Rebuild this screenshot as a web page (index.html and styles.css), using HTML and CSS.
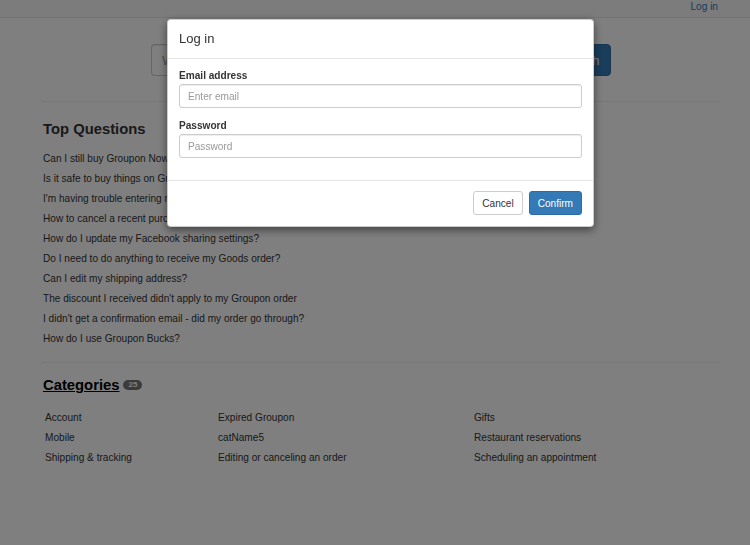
FILE: index.html
```html
<!DOCTYPE html>
<html lang="en">
<head>
<meta charset="utf-8">
<title>Help Center</title>
<link rel="stylesheet" href="styles.css">
</head>
<body>
<nav class="navbar">
  <a class="nav-link" href="#">Log in</a>
</nav>
<main class="container">
  <form class="search">
    <div class="input-group">
      <input class="search-input" type="text" placeholder="What can we help you with?">
      <button class="search-btn" type="button">Search</button>
    </div>
  </form>
  <hr class="rule rule-top">
  <section class="questions">
    <h3 class="heading">Top Questions</h3>
    <ul class="q-list">
      <li><a href="#">Can I still buy Groupon Now! deals?</a></li>
      <li><a href="#">Is it safe to buy things on Groupon?</a></li>
      <li><a href="#">I'm having trouble entering my promo code</a></li>
      <li><a href="#">How to cancel a recent purchase?</a></li>
      <li><a href="#">How do I update my Facebook sharing settings?</a></li>
      <li><a href="#">Do I need to do anything to receive my Goods order?</a></li>
      <li><a href="#">Can I edit my shipping address?</a></li>
      <li><a href="#">The discount I received didn't apply to my Groupon order</a></li>
      <li><a href="#">I didn't get a confirmation email - did my order go through?</a></li>
      <li><a href="#">How do I use Groupon Bucks?</a></li>
    </ul>
  </section>
  <hr class="rule rule-mid">
  <section class="categories">
    <h3 class="heading cat-heading"><a class="cat-link" href="#">Categories</a><span class="badge">25</span></h3>
    <div class="cat-grid">
      <a href="#">Account</a><a href="#">Expired Groupon</a><a href="#">Gifts</a>
      <a href="#">Mobile</a><a href="#">catName5</a><a href="#">Restaurant reservations</a>
      <a href="#">Shipping &amp; tracking</a><a href="#">Editing or canceling an order</a><a href="#">Scheduling an appointment</a>
    </div>
  </section>
</main>

<div class="backdrop">
  <div class="modal" role="dialog">
    <div class="modal-header">
      <h4 class="modal-title">Log in</h4>
    </div>
    <div class="modal-body">
      <div class="form-group">
        <label class="label" for="email">Email address</label>
        <input class="form-control" id="email" type="email" placeholder="Enter email">
      </div>
      <div class="form-group">
        <label class="label" for="pw">Password</label>
        <input class="form-control" id="pw" type="password" placeholder="Password">
      </div>
    </div>
    <div class="modal-footer">
      <button class="btn btn-default" type="button">Cancel</button>
      <button class="btn btn-primary" type="button">Confirm</button>
    </div>
  </div>
</div>
</body>
</html>
```
FILE: styles.css
```css
* { box-sizing: border-box; }
html, body { margin: 0; padding: 0; }
body {
  font-family: "Liberation Sans", Arial, sans-serif;
  font-size: 10.1px;
  color: #333;
  background: #fff;
  width: 750px;
  height: 545px;
  overflow: hidden;
}
a { color: #333; text-decoration: none; }

.navbar {
  height: 18px;
  background: #f8f8f8;
  border-bottom: 1px solid #e7e7e7;
  display: flex;
  justify-content: flex-end;
  padding-right: 32px;
}
.nav-link {
  color: #337ab7;
  line-height: 13px;
}

.container {
  margin-left: 42px;
  width: 678px;
}

.search {
  margin-top: 26px;
  display: flex;
  justify-content: center;
}
.input-group {
  display: flex;
  width: 460px;
  height: 32px;
}
.search-input {
  flex: 1;
  height: 32px;
  border: 1px solid #ccc;
  border-right: 0;
  border-radius: 4px 0 0 4px;
  padding: 0 10px;
  font-family: inherit;
  font-size: 13px;
  color: #555;
  box-shadow: inset 0 1px 1px rgba(0,0,0,.075);
}
.search-input::placeholder { color: #999; }
.search-btn {
  width: 64px;
  height: 32px;
  border: 1px solid #2e6da4;
  background: #337ab7;
  color: #fff;
  border-radius: 0 4px 4px 0;
  font-family: inherit;
  font-size: 13px;
  padding: 0;
}

.rule {
  border: 0;
  border-top: 1px solid #eee;
  margin: 0;
  height: 0;
}
.rule-top { margin-top: 25px; }
.rule-mid { margin-top: 13px; }

.heading {
  font-size: 14.8px;
  font-weight: bold;
  line-height: 16px;
  margin: 0;
  padding-left: 1px;
}
.questions .heading { margin-top: 19px; }
.q-list {
  list-style: none;
  margin: 12px 0 0;
  padding: 0 0 0 1px;
}
.q-list li { line-height: 20px; }

.cat-heading {
  margin-top: 14px;
  display: flex;
  align-items: center;
}
.cat-link {
  color: #000;
  text-decoration: underline;
}
.badge {
  display: inline-block;
  margin-left: 4px;
  height: 10px;
  line-height: 10px;
  padding: 0 5px;
  border-radius: 5px;
  background: #777;
  color: #fff;
  font-size: 8px;
  font-weight: bold;
}
.cat-grid {
  margin-top: 15px;
  display: grid;
  grid-template-columns: 173px 256px 1fr;
  padding-left: 3px;
}
.cat-grid a { line-height: 20px; }

.backdrop {
  position: fixed;
  inset: 0;
  background: rgba(0,0,0,.5);
}
.modal {
  position: absolute;
  left: 167px;
  top: 19px;
  width: 427px;
  background: #fff;
  border: 1px solid rgba(0,0,0,.2);
  border-radius: 4px;
  box-shadow: 0 3px 9px rgba(0,0,0,.5);
}
.modal-header {
  padding: 10px 11px 10px;
  border-bottom: 1px solid #e5e5e5;
}
.modal-title {
  margin: 0;
  font-size: 13px;
  font-weight: normal;
  line-height: 18px;
}
.modal-body {
  padding: 10px 11px 11px;
}
.form-group { margin-bottom: 11px; }
.form-group:last-child { margin-bottom: 11px; }
.label {
  display: block;
  font-weight: bold;
  line-height: 14px;
  margin-bottom: 1px;
}
.form-control {
  display: block;
  width: 100%;
  height: 24px;
  padding: 0 8px;
  border: 1px solid #ccc;
  border-radius: 3px;
  font-family: inherit;
  font-size: 10.1px;
  color: #555;
  box-shadow: inset 0 1px 1px rgba(0,0,0,.075);
}
.form-control::placeholder { color: #999; }
.modal-footer {
  border-top: 1px solid #e5e5e5;
  padding: 10px 11px 11px 11px;
  display: flex;
  justify-content: flex-end;
  gap: 6px;
}
.btn {
  height: 24px;
  padding: 0 8px;
  border-radius: 3px;
  font-family: inherit;
  font-size: 10.1px;
  border: 1px solid #ccc;
}
.btn-default { background: #fff; color: #333; }
.btn-primary { background: #337ab7; border-color: #2e6da4; color: #fff; }
```
